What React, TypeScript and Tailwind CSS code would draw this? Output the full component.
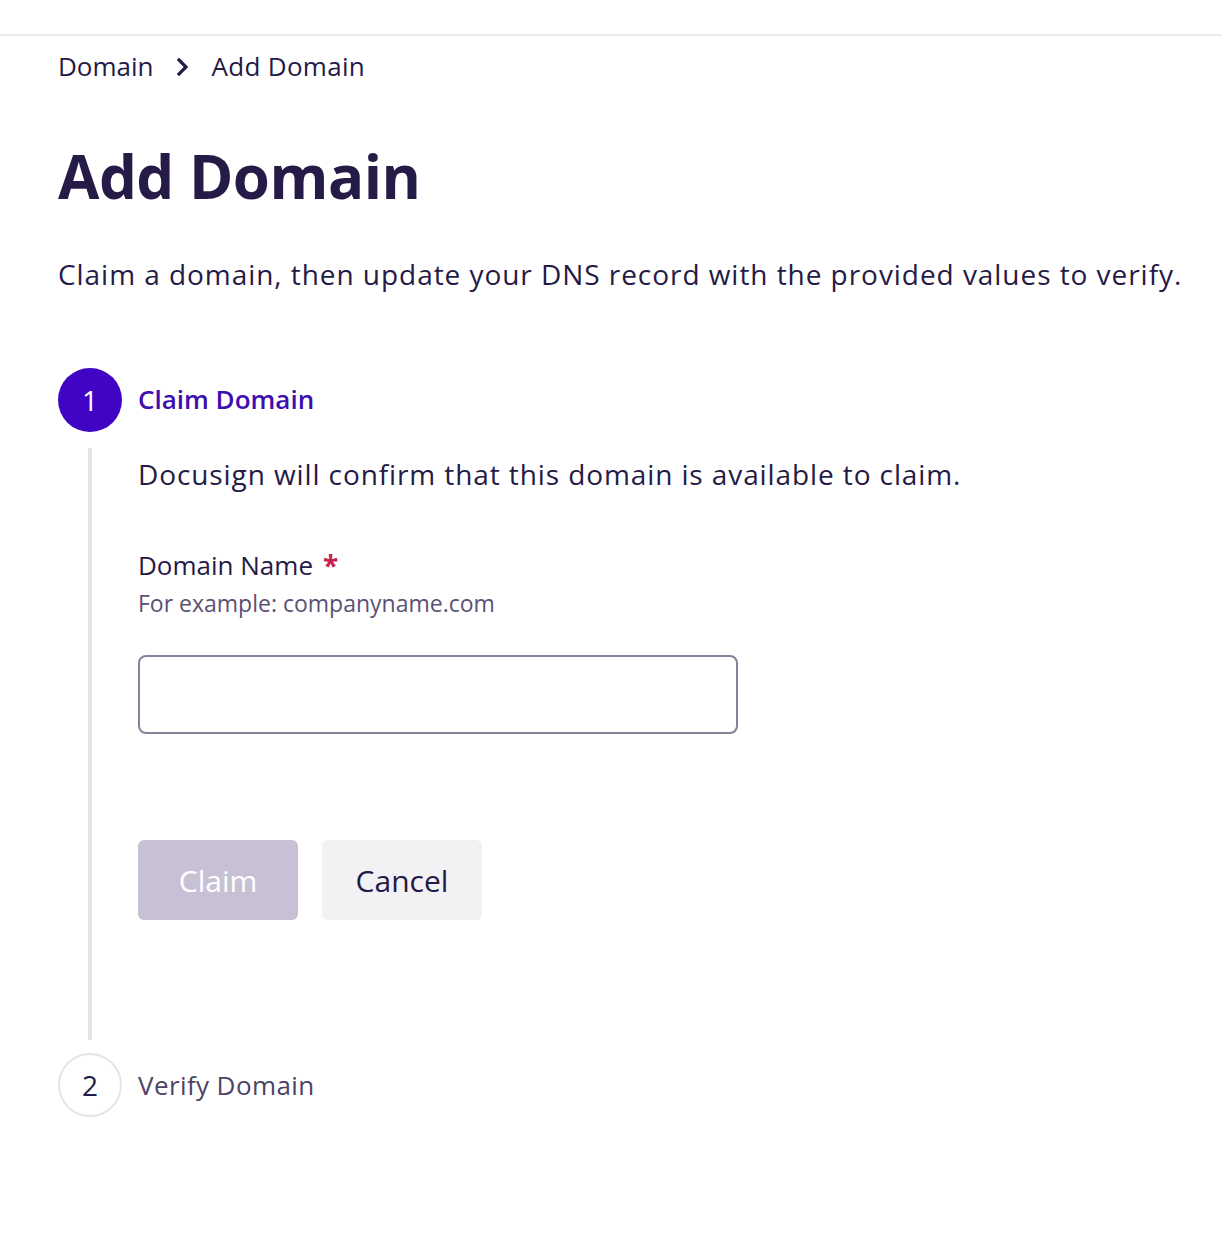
export default function App() {
  return (
    <main className="min-h-[1246px] overflow-hidden bg-white text-[#261a46] font-['Open_Sans','Liberation_Sans',sans-serif]">
      <div className="h-[36px] border-b-2 border-[#ebebeb]" />
      <div className="px-[58px]">
        <nav className="flex h-[62px] items-center gap-[22px] pb-[2px] text-[26px] leading-none">
          <span>Domain</span>
          <svg width="14" height="20" viewBox="0 0 14 20" fill="none" className="mt-[2px]">
            <path d="M3 3l7 7-7 7" stroke="#261a46" strokeWidth="3.2" strokeLinecap="square" />
          </svg>
          <span className="tracking-[0.3px]">Add Domain</span>
        </nav>
        <h1 className="mt-[46px] text-[60px] font-bold leading-[64px] tracking-[-0.5px]">Add Domain</h1>
        <p className="mt-[49px] whitespace-nowrap text-[28px] leading-[34px] tracking-[0.95px]">
          Claim a domain, then update your DNS record with the provided values to verify.
        </p>

        <ol className="mt-[77px]">
          <li className="flex items-center gap-[16px]">
            <span className="flex h-[64px] w-[64px] items-center justify-center rounded-full bg-[#3f04c4] text-[28px] text-white">
              1
            </span>
            <span className="pb-[2px] text-[26px] font-semibold text-[#3d0eb0]">Claim Domain</span>
          </li>
          <li className="ml-[30px] mt-[16px] flex border-l-4 border-[#e6e4ea] pl-[46px] pb-[120px]">
            <div className="w-full">
              <p className="pt-[8px] text-[28px] leading-[36px] tracking-[0.9px]">
                Docusign will confirm that this domain is available to claim.
              </p>
              <label className="mt-[57px] flex items-center text-[26px] font-medium leading-[32px]">
                Domain Name <span className="ml-[10px] text-[28px] font-bold text-[#c41f4f]">*</span>
              </label>
              <p className="mt-[8px] text-[23px] leading-[28px] text-[#5b5175]">For example: companyname.com</p>
              <input className="mt-[38px] block h-[79px] w-[600px] rounded-[8px] border-2 border-[#8a8199] bg-white px-4 text-[24px] outline-none" />
              <div className="mt-[106px] flex gap-[24px]">
                <button className="h-[80px] w-[160px] rounded-[6px] bg-[#c8c1d5] text-[30px] text-white">Claim</button>
                <button className="h-[80px] w-[160px] rounded-[6px] bg-[#f2f1f4] text-[30px] text-[#261a46]">Cancel</button>
              </div>
            </div>
          </li>
          <li className="mt-[13px] flex items-center gap-[16px]">
            <span className="flex h-[64px] w-[64px] items-center justify-center rounded-full border-2 border-[#e6e4ea] text-[28px]">
              2
            </span>
            <span className="text-[26px] tracking-[0.4px] text-[#4d4366]">Verify Domain</span>
          </li>
        </ol>
      </div>
    </main>
  );
}
